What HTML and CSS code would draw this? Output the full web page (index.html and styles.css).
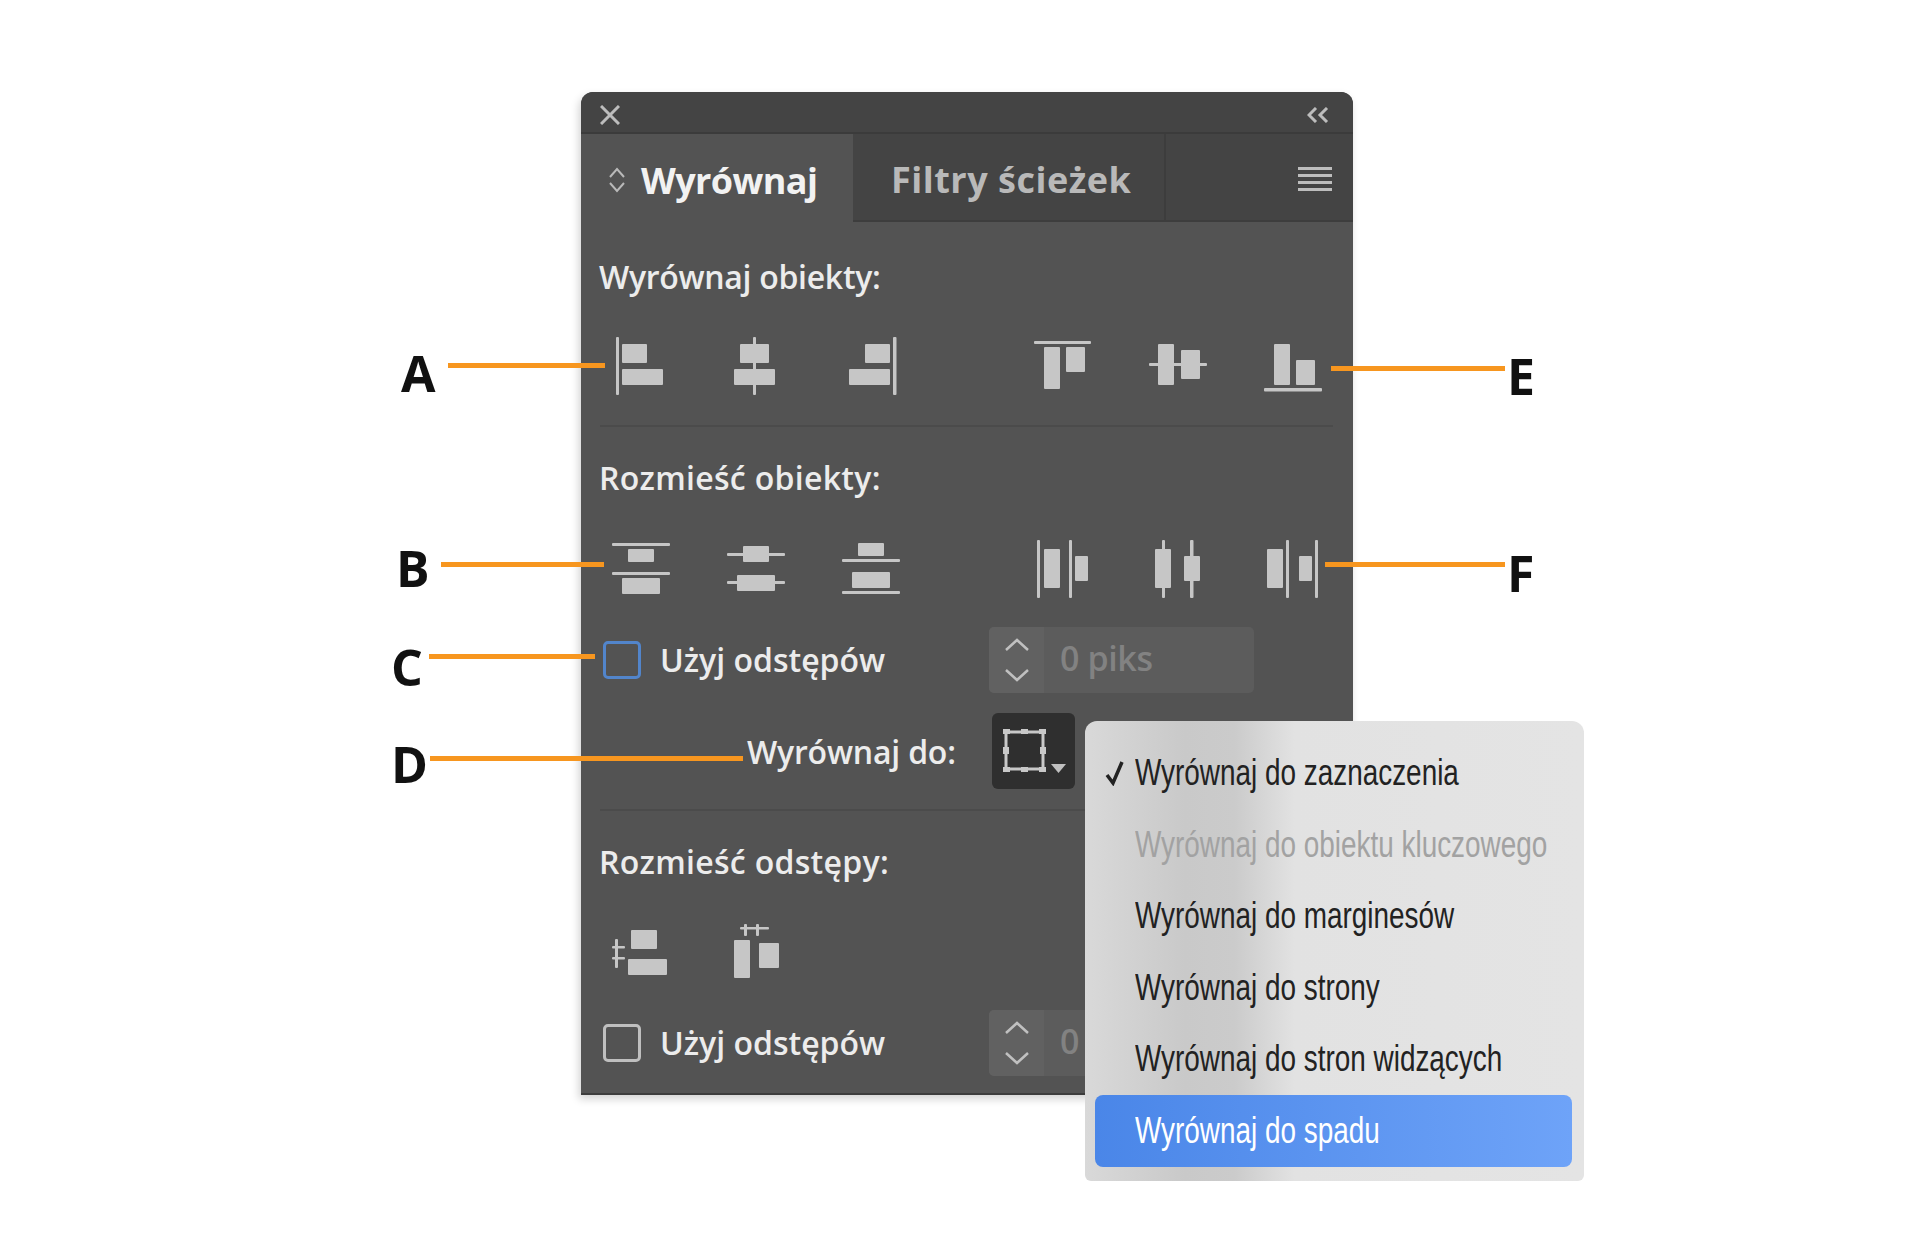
FILE: index.html
```html
<!DOCTYPE html>
<html lang="pl">
<head>
    <meta charset="UTF-8">
    <title>Wyrównaj</title>
    <link rel="stylesheet" href="styles.css">
</head>
<body>
    <div class="stage">
        <div class="panel">
            <div class="panel-top">
                <svg class="top-icon" width="20" height="20" viewBox="0 0 20 20"><path d="M1 1 L19 19 M19 1 L1 19"/></svg>
                <svg class="top-icon" width="22" height="16" viewBox="0 0 22 16"><path d="M9 1 L2 8 L9 15 M20 1 L13 8 L20 15"/></svg>
            </div>
            <div class="tabs">
                <div class="tab active">
                    <svg class="tab-arrows" width="18" height="26" viewBox="0 0 18 26"><path d="M2 10 L9 2 L16 10 M2 16 L9 24 L16 16"/></svg>
                    Wyrównaj
                </div>
                <div class="tab">Filtry ścieżek</div>
                <div class="tab-rest">
                    <div class="burger"><span></span><span></span><span></span><span></span></div>
                </div>
            </div>
            <div class="panel-body">
                <div class="title title-first">Wyrównaj obiekty:</div>
                <div class="icon-row icon-row-first">
                    <div class="icon-group">
                        <svg class="ico" viewBox="0 0 116 64"><rect x="34" y="3" width="3" height="58"/><rect x="40" y="10" width="25" height="19"/><rect x="40" y="35" width="41" height="16"/></svg>
                        <svg class="ico" viewBox="0 0 116 64"><rect x="55" y="3" width="3" height="58"/><rect x="42" y="10" width="29" height="19"/><rect x="36" y="35" width="41" height="16"/></svg>
                        <svg class="ico" viewBox="0 0 116 64"><rect x="79" y="3" width="3.5" height="58"/><rect x="51" y="10" width="25" height="19"/><rect x="35" y="35" width="41" height="16"/></svg>
                    </div>
                    <div class="icon-group">
                        <svg class="ico" viewBox="0 0 116 64"><rect x="30" y="7" width="57" height="3"/><rect x="40" y="13" width="16" height="42"/><rect x="62" y="13" width="19" height="25"/></svg>
                        <svg class="ico" viewBox="0 0 116 64"><rect x="29" y="29" width="58" height="3"/><rect x="38" y="10" width="16" height="41"/><rect x="61" y="16" width="19" height="29"/></svg>
                        <svg class="ico" viewBox="0 0 116 64"><rect x="28" y="54" width="58" height="3.5"/><rect x="38" y="10" width="16" height="41"/><rect x="60" y="26" width="19" height="25"/></svg>
                    </div>
                </div>
                <div class="sep"></div>
                <div class="title">Rozmieść obiekty:</div>
                <div class="icon-row">
                    <div class="icon-group">
                        <svg class="ico" viewBox="0 0 116 64"><rect x="30" y="6" width="58" height="3"/><rect x="46" y="12" width="26" height="13"/><rect x="30" y="35" width="58" height="3"/><rect x="40" y="41" width="38" height="16"/></svg>
                        <svg class="ico" viewBox="0 0 116 64"><rect x="29" y="16" width="58" height="3"/><rect x="45" y="9" width="26" height="16"/><rect x="29" y="44" width="58" height="3"/><rect x="39" y="38" width="38" height="16"/></svg>
                        <svg class="ico" viewBox="0 0 116 64"><rect x="44" y="6" width="26" height="13"/><rect x="28" y="22" width="58" height="3"/><rect x="38" y="35" width="38" height="16"/><rect x="28" y="54" width="58" height="3"/></svg>
                    </div>
                    <div class="icon-group">
                        <svg class="ico" viewBox="0 0 116 64"><rect x="33" y="3" width="3" height="58"/><rect x="40" y="12" width="16" height="39"/><rect x="65" y="3" width="3" height="58"/><rect x="71" y="19" width="13" height="25"/></svg>
                        <svg class="ico" viewBox="0 0 116 64"><rect x="42" y="3" width="3" height="58"/><rect x="35" y="12" width="16" height="39"/><rect x="70" y="3" width="3.5" height="58"/><rect x="64" y="19" width="16" height="25"/></svg>
                        <svg class="ico" viewBox="0 0 116 64"><rect x="31" y="12" width="16" height="39"/><rect x="50" y="3" width="3" height="58"/><rect x="63" y="19" width="13" height="25"/><rect x="79" y="3" width="3" height="58"/></svg>
                    </div>
                </div>
                <div class="check-row">
                    <div class="check check-focus"></div>
                    <div class="check-label">Użyj odstępów</div>
                    <div class="stepper">
                        <div class="stepper-arrows">
                            <svg width="24" height="13" viewBox="0 0 24 13"><path d="M1 12 L12 2 L23 12"/></svg>
                            <svg width="24" height="13" viewBox="0 0 24 13"><path d="M1 1 L12 11 L23 1"/></svg>
                        </div>
                        <div class="stepper-value">0 piks</div>
                    </div>
                </div>
                <div class="align-row">
                    <div class="align-label">Wyrównaj do:</div>
                    <div class="align-btn">
                        <svg width="68" height="52" viewBox="0 0 68 52">
                            <rect class="frame" x="4" y="6" width="37" height="37"/>
                            <path class="frame-marks" d="M1 3 H8 V8 H1 Z M19 3 H26 V8 H19 Z M37 3 H44 V8 H37 Z M1 41 H8 V46 H1 Z M19 41 H26 V46 H19 Z M37 41 H44 V46 H37 Z M1 21 H7 V28 H1 Z M38 21 H44 V28 H38 Z"/>
                            <path class="frame-caret" d="M49 38 H64 L56.5 47 Z"/>
                        </svg>
                    </div>
                </div>
                <div class="sep sep-low"></div>
                <div class="title">Rozmieść odstępy:</div>
                <div class="icon-row">
                    <div class="icon-group">
                        <svg class="ico" viewBox="0 0 116 64"><rect x="49" y="9" width="26" height="19"/><rect x="46" y="38" width="39" height="16"/><rect x="33" y="18" width="3" height="29"/><rect x="30" y="25" width="13" height="2.5"/><rect x="30" y="36" width="13" height="2.5"/></svg>
                        <svg class="ico" viewBox="0 0 116 64"><rect x="36" y="19" width="16" height="38"/><rect x="61" y="22" width="20" height="25"/><rect x="42" y="6" width="29" height="2.5"/><rect x="46" y="3" width="3" height="12"/><rect x="58" y="3" width="3" height="12"/></svg>
                    </div>
                </div>
                <div class="check-row check-row-low">
                    <div class="check"></div>
                    <div class="check-label">Użyj odstępów</div>
                    <div class="stepper">
                        <div class="stepper-arrows">
                            <svg width="24" height="13" viewBox="0 0 24 13"><path d="M1 12 L12 2 L23 12"/></svg>
                            <svg width="24" height="13" viewBox="0 0 24 13"><path d="M1 1 L12 11 L23 1"/></svg>
                        </div>
                        <div class="stepper-value">0</div>
                    </div>
                </div>
            </div>
        </div>

        <div class="menu">
            <div class="menu-item">
                <svg class="tick" width="20" height="26" viewBox="0 0 20 26"><path d="M2 15 L8 23 L17 2"/></svg>
                <span>Wyrównaj do zaznaczenia</span>
            </div>
            <div class="menu-item disabled"><span>Wyrównaj do obiektu kluczowego</span></div>
            <div class="menu-item"><span>Wyrównaj do marginesów</span></div>
            <div class="menu-item"><span>Wyrównaj do strony</span></div>
            <div class="menu-item"><span>Wyrównaj do stron widzących</span></div>
            <div class="menu-item selected"><span>Wyrównaj do spadu</span></div>
        </div>

        <div class="line line-a"></div><div class="letter letter-a">A</div>
        <div class="line line-b"></div><div class="letter letter-b">B</div>
        <div class="line line-c"></div><div class="letter letter-c">C</div>
        <div class="line line-d"></div><div class="letter letter-d">D</div>
        <div class="line line-e"></div><div class="letter letter-e">E</div>
        <div class="line line-f"></div><div class="letter letter-f">F</div>
    </div>
</body>
</html>
```

FILE: styles.css
```css
:root {
    --panel-bg: #535353;
    --panel-dark: #444444;
    --icon-color: #c6c6c6;
    --orange: #f7961f;
}

* {
    margin: 0;
    padding: 0;
    box-sizing: border-box;
}

body {
    background-color: #ffffff;
    font-family: 'Open Sans', 'Noto Sans', sans-serif;
}

.stage {
    position: relative;
    width: 1920px;
    height: 1240px;
    padding: 92px 0 0 581px;
}

.panel {
    width: 772px;
    height: 1003px;
    background-color: var(--panel-bg);
    border-radius: 12px 12px 0 0;
    box-shadow: -2px 4px 8px rgba(0, 0, 0, 0.18);
    border-bottom: 2px solid #3c3c3c;
    overflow: hidden;
}

.panel-top {
    height: 42px;
    background-color: var(--panel-dark);
    border-bottom: 2px solid #3b3b3b;
    display: flex;
    align-items: center;
    justify-content: space-between;
    padding: 6px 24px 0 19px;
}

.top-icon path {
    fill: none;
    stroke: #bdbdbd;
    stroke-width: 3;
}

.tabs {
    height: 88px;
    display: flex;
    font-weight: 700;
    font-size: 36px;
    letter-spacing: -0.6px;
}

.tab {
    display: flex;
    align-items: center;
    width: 313px;
    padding: 4px 0 0 38px;
    color: #b9b9b9;
    letter-spacing: 0.5px;
    background-color: var(--panel-dark);
    border-right: 2px solid #3d3d3d;
    border-bottom: 2px solid #3d3d3d;
}

.tab.active {
    width: 272px;
    padding-left: 27px;
    gap: 15px;
    color: #f2f2f2;
    letter-spacing: -0.6px;
    background-color: var(--panel-bg);
    border: none;
}

.tab-arrows path {
    fill: none;
    stroke: #b9b9b9;
    stroke-width: 2;
}

.tab-rest {
    flex: 1;
    display: flex;
    align-items: center;
    justify-content: flex-end;
    padding: 4px 21px 0 0;
    background-color: var(--panel-dark);
    border-bottom: 2px solid #3d3d3d;
}

.burger {
    display: flex;
    flex-direction: column;
    gap: 4px;
    width: 34px;
}

.burger span {
    height: 3px;
    background-color: #bdbdbd;
}

.panel-body {
    display: flex;
    flex-direction: column;
}

.title {
    height: 40px;
    line-height: 38px;
    padding-left: 18px;
    margin-top: 32px;
    font-size: 32px;
    font-weight: 600;
    letter-spacing: 0.3px;
    color: #ececec;
}

.title-first {
    margin-top: 35px;
    line-height: 40px;
    letter-spacing: -0.3px;
}

.icon-row {
    display: flex;
    justify-content: space-between;
    padding: 0 1px;
    margin-top: 38px;
}

.icon-row-first {
    margin-top: 37px;
}

.icon-group {
    display: flex;
}

.ico {
    display: block;
    width: 116px;
    height: 64px;
    fill: var(--icon-color);
}

.ico rect {
    rx: 1px;
}

.sep {
    height: 2px;
    margin: 27px 20px 0 19px;
    background-color: #4b4b4b;
}

.sep-low {
    margin-top: 20px;
}

.check-row {
    display: flex;
    align-items: center;
    height: 66px;
    margin-top: 26px;
    padding-left: 22px;
}

.check-row-low {
    margin-top: 25px;
}

.check {
    width: 38px;
    height: 38px;
    border: 3px solid #bfbfbf;
    border-radius: 5px;
}

.check-focus {
    border-color: #5285cb;
}

.check-label {
    width: 348px;
    padding-left: 19px;
    font-size: 32px;
    font-weight: 600;
    line-height: 60px;
    color: #ececec;
}

.stepper {
    display: flex;
    width: 265px;
    height: 66px;
    background-color: #5c5c5c;
    border-radius: 5px;
    overflow: hidden;
}

.stepper-arrows {
    width: 55px;
    background-color: #616161;
    display: flex;
    flex-direction: column;
    align-items: center;
    justify-content: space-between;
    padding: 11px 0;
}

.stepper-arrows svg {
    display: block;
}

.stepper-arrows path {
    fill: none;
    stroke: #c0c0c0;
    stroke-width: 2.5;
}

.stepper-value {
    padding-left: 16px;
    line-height: 62px;
    font-size: 34px;
    font-weight: 600;
    letter-spacing: -0.4px;
    color: #828282;
}

.align-row {
    display: flex;
    align-items: center;
    height: 76px;
    margin-top: 20px;
    padding-left: 166px;
}

.align-label {
    width: 245px;
    font-size: 32px;
    font-weight: 600;
    letter-spacing: -0.2px;
    color: #ececec;
}

.align-btn {
    width: 83px;
    height: 76px;
    background-color: #2f2f2f;
    border-radius: 6px;
    padding: 13px 0 0 10px;
}

.align-btn svg {
    display: block;
}

.frame {
    fill: none;
    stroke: #c8c8c8;
    stroke-width: 3;
}

.frame-marks {
    fill: #c8c8c8;
}

.frame-caret {
    fill: #c0c0c0;
}

.menu {
    position: absolute;
    left: 1085px;
    top: 721px;
    width: 499px;
    height: 460px;
    padding: 16px 12px 0 10px;
    border-radius: 12px 12px 6px 6px;
    background: linear-gradient(90deg, #d9d9d9 0%, #c9c9c9 20%, #cbcbcb 30%, #e2e2e2 42%, #e4e4e4 100%);
    font-family: 'Liberation Sans', sans-serif;
    font-size: 36px;
    color: #222222;
}

.menu-item {
    position: relative;
    height: 71.6px;
    line-height: 71.6px;
    padding-left: 40px;
    border-radius: 8px;
    white-space: nowrap;
}

/* the reference text is squeezed sideways, no narrow font is installed */
.menu-item span {
    display: inline-block;
    transform: scaleX(0.775);
    transform-origin: left center;
}

.menu-item.disabled {
    color: #a2a2a2;
}

.menu-item.selected {
    color: #ffffff;
    background: linear-gradient(90deg, #4a86e8 0%, #6ea3f8 100%);
}

.tick {
    position: absolute;
    left: 10px;
    top: 23px;
}

.tick path {
    fill: none;
    stroke: #222222;
    stroke-width: 3.5;
}

.line {
    position: absolute;
    height: 5px;
    background-color: var(--orange);
}

.line-a { left: 448px; top: 363px; width: 157px; }
.line-b { left: 441px; top: 562px; width: 163px; }
.line-c { left: 429px; top: 654px; width: 166px; }
.line-d { left: 430px; top: 756px; width: 313px; }
.line-e { left: 1331px; top: 366px; width: 174px; }
.line-f { left: 1325px; top: 562px; width: 180px; }

.letter {
    position: absolute;
    font-size: 50px;
    font-weight: 700;
    line-height: 60px;
    color: #111111;
}

.letter-a { left: 401px; top: 343px; }
.letter-b { left: 396px; top: 538px; }
.letter-c { left: 391px; top: 637px; }
.letter-d { left: 391px; top: 734px; }
.letter-e { left: 1507px; top: 346px; }
.letter-f { left: 1507px; top: 543px; }
```
